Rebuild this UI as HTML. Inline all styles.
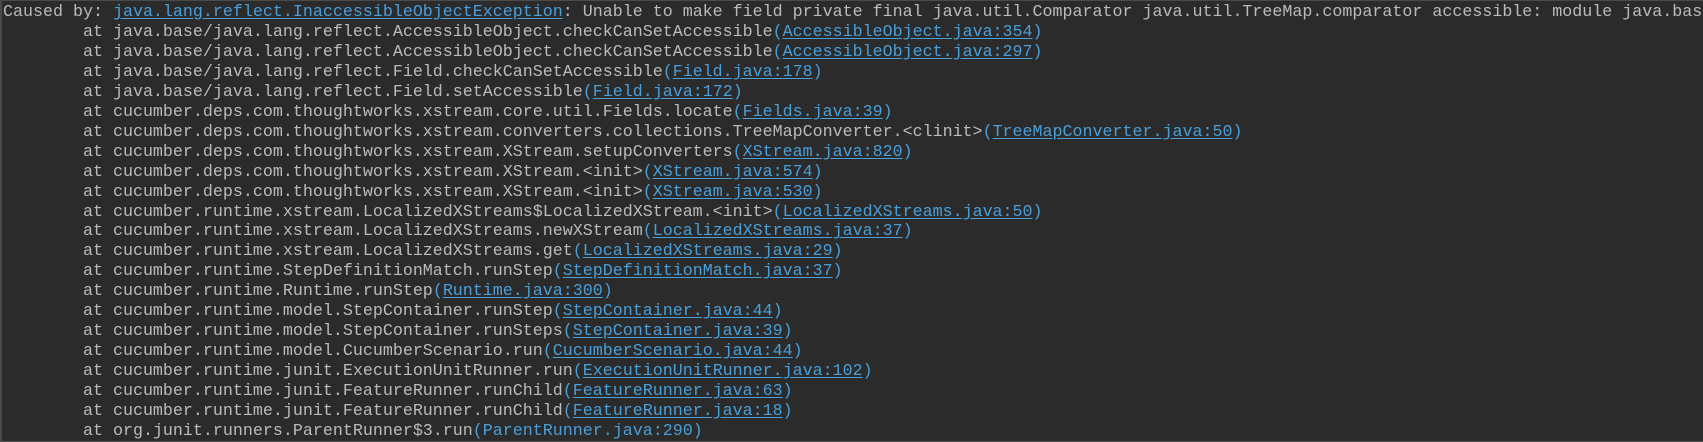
<!DOCTYPE html>
<html><head><meta charset="utf-8"><style>
html,body{margin:0;padding:0;background:#2b2b2b;width:1703px;height:442px;overflow:hidden}
.c{position:absolute;left:0;top:0;width:1701px;height:440px;border-top:1px solid #4a4a4a;border-left:2px solid #4a4a4a;border-bottom:1px solid #555;}
pre{margin:0;position:absolute;left:3px;top:3px;font-family:"Liberation Mono",monospace;font-size:16.67px;line-height:19.95px;color:#bbbbbb;white-space:pre;tab-size:8}
a{color:#4a9fd8;text-decoration:underline;text-underline-offset:2px}
b{font-weight:normal;color:#4a9fd8}
</style></head><body><div class="c"></div><pre>Caused by: <a>java.lang.reflect.InaccessibleObjectException</a>: Unable to make field private final java.util.Comparator java.util.TreeMap.comparator accessible: module java.base
	at java.base/java.lang.reflect.AccessibleObject.checkCanSetAccessible<b>(</b><a>AccessibleObject.java:354</a><b>)</b>
	at java.base/java.lang.reflect.AccessibleObject.checkCanSetAccessible<b>(</b><a>AccessibleObject.java:297</a><b>)</b>
	at java.base/java.lang.reflect.Field.checkCanSetAccessible<b>(</b><a>Field.java:178</a><b>)</b>
	at java.base/java.lang.reflect.Field.setAccessible<b>(</b><a>Field.java:172</a><b>)</b>
	at cucumber.deps.com.thoughtworks.xstream.core.util.Fields.locate<b>(</b><a>Fields.java:39</a><b>)</b>
	at cucumber.deps.com.thoughtworks.xstream.converters.collections.TreeMapConverter.&lt;clinit&gt;<b>(</b><a>TreeMapConverter.java:50</a><b>)</b>
	at cucumber.deps.com.thoughtworks.xstream.XStream.setupConverters<b>(</b><a>XStream.java:820</a><b>)</b>
	at cucumber.deps.com.thoughtworks.xstream.XStream.&lt;init&gt;<b>(</b><a>XStream.java:574</a><b>)</b>
	at cucumber.deps.com.thoughtworks.xstream.XStream.&lt;init&gt;<b>(</b><a>XStream.java:530</a><b>)</b>
	at cucumber.runtime.xstream.LocalizedXStreams$LocalizedXStream.&lt;init&gt;<b>(</b><a>LocalizedXStreams.java:50</a><b>)</b>
	at cucumber.runtime.xstream.LocalizedXStreams.newXStream<b>(</b><a>LocalizedXStreams.java:37</a><b>)</b>
	at cucumber.runtime.xstream.LocalizedXStreams.get<b>(</b><a>LocalizedXStreams.java:29</a><b>)</b>
	at cucumber.runtime.StepDefinitionMatch.runStep<b>(</b><a>StepDefinitionMatch.java:37</a><b>)</b>
	at cucumber.runtime.Runtime.runStep<b>(</b><a>Runtime.java:300</a><b>)</b>
	at cucumber.runtime.model.StepContainer.runStep<b>(</b><a>StepContainer.java:44</a><b>)</b>
	at cucumber.runtime.model.StepContainer.runSteps<b>(</b><a>StepContainer.java:39</a><b>)</b>
	at cucumber.runtime.model.CucumberScenario.run<b>(</b><a>CucumberScenario.java:44</a><b>)</b>
	at cucumber.runtime.junit.ExecutionUnitRunner.run<b>(</b><a>ExecutionUnitRunner.java:102</a><b>)</b>
	at cucumber.runtime.junit.FeatureRunner.runChild<b>(</b><a>FeatureRunner.java:63</a><b>)</b>
	at cucumber.runtime.junit.FeatureRunner.runChild<b>(</b><a>FeatureRunner.java:18</a><b>)</b>
	at org.junit.runners.ParentRunner$3.run<b>(ParentRunner.java:290)</b></pre></body></html>
